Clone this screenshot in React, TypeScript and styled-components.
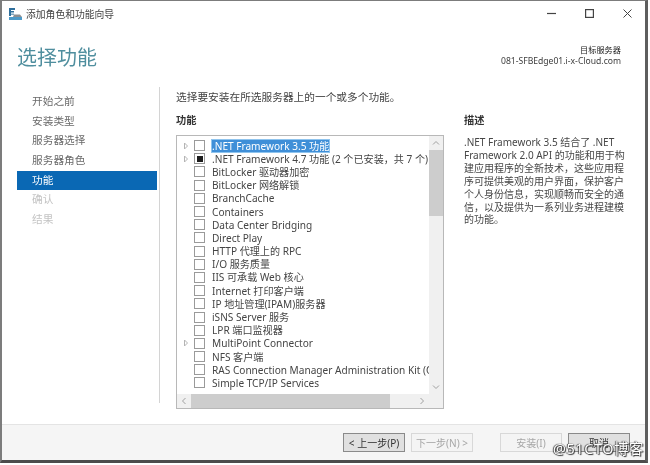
import React from "react";
import styled, { createGlobalStyle } from "styled-components";

const Global = createGlobalStyle`
  html, body { margin: 0; padding: 0; background: #fff; }
  body { width: 650px; height: 465px; overflow: hidden; font-family: "Noto Sans", "Noto Sans CJK SC", sans-serif; }
  #root { width: 650px; height: 465px; }
`;

const Stage = styled.div`
  position: relative;
  width: 650px;
  height: 465px;
  padding: 0 2px 2px 0;
  box-sizing: border-box;
  filter: blur(0.45px);
`;

const Wizard = styled.div`
  width: 648px;
  height: 463px;
  box-sizing: border-box;
  display: flex;
  flex-direction: column;
  background: #fff;
  border-style: solid;
  border-color: #7c7c7c;
  border-width: 1px 3px 3px 2px;
  border-bottom-color: #4c4c4c;
  border-right-color: #5e5e5e;
`;

const TitleBar = styled.div`
  height: 25px;
  flex: none;
  display: flex;
  align-items: center;
  padding-left: 6px;
  font-size: 9.8px;
  color: #444;
`;

const TitleText = styled.span`
  margin-left: 3px;
`;

const WindowControls = styled.div`
  margin-left: auto;
  display: flex;
  align-items: center;
  gap: 29px;
  padding-right: 13px;
  color: #444;
`;

const Header = styled.div`
  height: 61px;
  flex: none;
  display: flex;
  justify-content: space-between;
  align-items: flex-start;
  padding: 16px 24px 0 15px;
  box-sizing: border-box;
`;

const PageTitle = styled.h1`
  margin: 0;
  font-size: 20px;
  line-height: 32px;
  font-weight: 400;
  color: #4f8e9e;
`;

const Target = styled.div`
  text-align: right;
  font-size: 8.6px;
  line-height: 11.5px;
  color: #3c3c3c;
  padding-top: 2px;
`;

const TargetLabel = styled.div`
  font-size: 8.2px;
  color: #222;
`;

const Body = styled.div`
  flex: 1;
  min-height: 0;
  display: flex;
`;

const Nav = styled.nav`
  width: 140px;
  margin-left: 15px;
  flex: none;
  padding-top: 5px;
`;

const NavItem = styled.div<{ $state?: "active" | "off" }>`
  height: 19.7px;
  line-height: 19.7px;
  padding-left: 15px;
  font-size: 10.7px;
  color: ${(p) => (p.$state === "active" ? "#fff" : p.$state === "off" ? "#c4c4c4" : "#6a6a6a")};
  background: ${(p) => (p.$state === "active" ? "#0a68b4" : "transparent")};
`;

const Divider = styled.div`
  width: 1px;
  height: 316px;
  margin-left: 2px;
  background: #d4d4d4;
  flex: none;
`;

const Main = styled.div`
  flex: 1;
  min-width: 0;
  padding: 3px 0 0 16px;
  display: flex;
  flex-direction: column;
`;

const Lead = styled.div`
  font-size: 10.7px;
  line-height: 14px;
  color: #444;
`;

const Columns = styled.div`
  display: flex;
  margin-top: 9px;
`;

const FeatureColumn = styled.div`
  width: 268px;
  flex: none;
`;

const DescColumn = styled.div`
  width: 170px;
  margin-left: 20px;
  flex: none;
`;

const SectionLabel = styled.div`
  font-size: 10.2px;
  line-height: 14px;
  font-weight: 600;
  color: #333;
`;

const ListBox = styled.div`
  margin-top: 8px;
  width: 268px;
  height: 274px;
  box-sizing: border-box;
  border: 1px solid #b8b8b8;
  display: grid;
  grid-template-columns: 1fr 14px;
  grid-template-rows: 1fr 14px;
  overflow: hidden;
`;

const Rows = styled.div`
  padding-top: 3px;
  overflow: hidden;
  min-width: 0;
`;

const Row = styled.div`
  height: 13.2px;
  display: flex;
  align-items: center;
  white-space: nowrap;
  font-size: 10.1px;
  color: #454545;
`;

const Arrow = styled.span`
  width: 17px;
  flex: none;
  display: flex;
  justify-content: center;
  color: #b4b4b4;
`;

const Box = styled.span<{ $mixed?: boolean }>`
  width: 11px;
  height: 11px;
  flex: none;
  box-sizing: border-box;
  border: 1px solid #9a9a9a;
  background: #fff;
  margin-right: 7px;
  display: flex;
  align-items: center;
  justify-content: center;
  &::after {
    content: "";
    display: ${(p) => (p.$mixed ? "block" : "none")};
    width: 6px;
    height: 6px;
    background: #1c1c1c;
  }
`;

const RowLabel = styled.span<{ $selected?: boolean }>`
  line-height: 12px;
  background: ${(p) => (p.$selected ? "#3f8fd8" : "transparent")};
  color: ${(p) => (p.$selected ? "#fff" : "inherit")};
  outline: ${(p) => (p.$selected ? "1px solid #8fc4ee" : "none")};
`;

const VScroll = styled.div`
  background: #f0f0f0;
  display: flex;
  flex-direction: column;
  align-items: center;
  color: #a0a0a0;
`;

const ScrollCap = styled.div`
  height: 14px;
  width: 100%;
  flex: none;
  display: flex;
  align-items: center;
  justify-content: center;
`;

const VThumb = styled.div`
  width: 100%;
  height: 66px;
  background: #cdcdcd;
  flex: none;
`;

const Spring = styled.div`
  flex: 1;
`;

const HScroll = styled.div`
  background: #f0f0f0;
  display: flex;
  color: #a0a0a0;
`;

const HCap = styled.div`
  width: 14px;
  flex: none;
  display: flex;
  align-items: center;
  justify-content: center;
`;

const HThumb = styled.div`
  width: 199px;
  background: #cdcdcd;
  flex: none;
`;

const Corner = styled.div`
  background: #f0f0f0;
`;

const Description = styled.div`
  margin-top: 9px;
  font-size: 10px;
  line-height: 12.9px;
  color: #474747;
`;

const DescriptionLine = styled.div`
  white-space: nowrap;
`;

const Footer = styled.div`
  height: 36px;
  flex: none;
  border-top: 1px solid #e4e4e4;
  background: #f5f5f5;
  box-sizing: border-box;
  display: flex;
  align-items: flex-start;
  padding: 8px 0 0 341px;
`;

const Button = styled.div<{ $variant?: "primary" | "disabled"; $gap?: number }>`
  width: 62px;
  height: 19px;
  box-sizing: border-box;
  margin-left: ${(p) => p.$gap ?? 0}px;
  display: flex;
  align-items: center;
  justify-content: center;
  font-size: 10px;
  color: ${(p) => (p.$variant === "disabled" ? "#a6a6a6" : "#333")};
  background: ${(p) => (p.$variant === "disabled" ? "#f4f4f4" : "#e0e0e0")};
  border: 1px solid ${(p) => (p.$variant === "disabled" ? "#d8d8d8" : "#8a8a8a")};
`;

const Watermark = styled.div`
  position: absolute;
  left: 553px;
  top: 440px;
  font-size: 14.4px;
  line-height: 18px;
  letter-spacing: 0.6px;
  color: #fff;
  text-shadow: 0 0 1px #222, 1px 1px 1px #333, -1px 0 1px #555;
  white-space: nowrap;
`;

const features: { label: string; arrow?: boolean; mixed?: boolean; selected?: boolean }[] = [
  { label: ".NET Framework 3.5 功能", arrow: true, selected: true },
  { label: ".NET Framework 4.7 功能 (2 个已安装，共 7 个)", arrow: true, mixed: true },
  { label: "BitLocker 驱动器加密" },
  { label: "BitLocker 网络解锁" },
  { label: "BranchCache" },
  { label: "Containers" },
  { label: "Data Center Bridging" },
  { label: "Direct Play" },
  { label: "HTTP 代理上的 RPC" },
  { label: "I/O 服务质量" },
  { label: "IIS 可承载 Web 核心" },
  { label: "Internet 打印客户端" },
  { label: "IP 地址管理(IPAM)服务器" },
  { label: "iSNS Server 服务" },
  { label: "LPR 端口监视器" },
  { label: "MultiPoint Connector", arrow: true },
  { label: "NFS 客户端" },
  { label: "RAS Connection Manager Administration Kit (CMAK)" },
  { label: "Simple TCP/IP Services" },
];

const nav: { label: string; state?: "active" | "off" }[] = [
  { label: "开始之前" },
  { label: "安装类型" },
  { label: "服务器选择" },
  { label: "服务器角色" },
  { label: "功能", state: "active" },
  { label: "确认", state: "off" },
  { label: "结果", state: "off" },
];

const descriptionLines = [
  ".NET Framework 3.5 结合了 .NET",
  "Framework 2.0 API 的功能和用于构",
  "建应用程序的全新技术，这些应用程",
  "序可提供美观的用户界面，保护客户",
  "个人身份信息，实现顺畅而安全的通",
  "信，以及提供为一系列业务进程建模",
  "的功能。",
];

const Chevron = ({ d }: { d: string }) => (
  <svg width="8" height="8" viewBox="0 0 8 8" fill="none" stroke="currentColor" strokeWidth="1">
    <path d={d} />
  </svg>
);

const AppIcon = () => (
  <svg width="15" height="14" viewBox="0 0 15 14">
    <path d="M1 1h6v2H3v6H1z" fill="#2f6f9c" />
    <rect x="3" y="4" width="3" height="1.5" fill="#2f6f9c" />
    <rect x="3" y="6.5" width="3" height="1.5" fill="#7fa9c4" />
    <path d="M1 10h13v3H1z" fill="#4d9ac8" />
    <path d="M6 7.5h6l2 2.5H5z" fill="#8a8f94" />
  </svg>
);

export default function App() {
  return (
    <Stage>
      <Global />
      <Wizard>
        <TitleBar>
          <AppIcon />
          <TitleText>添加角色和功能向导</TitleText>
          <WindowControls>
            <svg width="9" height="9" viewBox="0 0 9 9" stroke="currentColor" strokeWidth="1.2" fill="none">
              <path d="M0 4.5h9" />
            </svg>
            <svg width="9" height="9" viewBox="0 0 9 9" stroke="currentColor" strokeWidth="1.2" fill="none">
              <rect x="0.6" y="0.6" width="7.8" height="7.8" />
            </svg>
            <svg width="9" height="9" viewBox="0 0 9 9" stroke="currentColor" strokeWidth="1" fill="none">
              <path d="M0.5 0.5l8 8M8.5 0.5l-8 8" />
            </svg>
          </WindowControls>
        </TitleBar>
        <Header>
          <PageTitle>选择功能</PageTitle>
          <Target>
            <TargetLabel>目标服务器</TargetLabel>
            <div>081-SFBEdge01.i-x-Cloud.com</div>
          </Target>
        </Header>
        <Body>
          <Nav>
            {nav.map((n) => (
              <NavItem key={n.label} $state={n.state}>
                {n.label}
              </NavItem>
            ))}
          </Nav>
          <Divider />
          <Main>
            <Lead>选择要安装在所选服务器上的一个或多个功能。</Lead>
            <Columns>
              <FeatureColumn>
                <SectionLabel>功能</SectionLabel>
                <ListBox>
                  <Rows>
                    {features.map((f) => (
                      <Row key={f.label}>
                        <Arrow>
                          {f.arrow && (
                            <svg width="6" height="8" viewBox="0 0 6 8" fill="none" stroke="currentColor">
                              <path d="M1.5 1l3 3-3 3z" />
                            </svg>
                          )}
                        </Arrow>
                        <Box $mixed={f.mixed} />
                        <RowLabel $selected={f.selected}>{f.label}</RowLabel>
                      </Row>
                    ))}
                  </Rows>
                  <VScroll>
                    <ScrollCap>
                      <Chevron d="M1 5.5l3-3 3 3" />
                    </ScrollCap>
                    <VThumb />
                    <Spring />
                    <ScrollCap>
                      <Chevron d="M1 2.5l3 3 3-3" />
                    </ScrollCap>
                  </VScroll>
                  <HScroll>
                    <HCap>
                      <Chevron d="M5.5 1l-3 3 3 3" />
                    </HCap>
                    <HThumb />
                    <Spring />
                    <HCap>
                      <Chevron d="M2.5 1l3 3-3 3" />
                    </HCap>
                  </HScroll>
                  <Corner />
                </ListBox>
              </FeatureColumn>
              <DescColumn>
                <SectionLabel>描述</SectionLabel>
                <Description>
                  {descriptionLines.map((line) => (
                    <DescriptionLine key={line}>{line}</DescriptionLine>
                  ))}
                </Description>
              </DescColumn>
            </Columns>
          </Main>
        </Body>
        <Footer>
          <Button>&lt; 上一步(P)</Button>
          <Button $variant="disabled" $gap={6}>
            下一步(N) &gt;
          </Button>
          <Button $variant="disabled" $gap={27}>
            安装(I)
          </Button>
          <Button $gap={6}>取消</Button>
        </Footer>
      </Wizard>
      <Watermark>@51CTO博客</Watermark>
    </Stage>
  );
}
